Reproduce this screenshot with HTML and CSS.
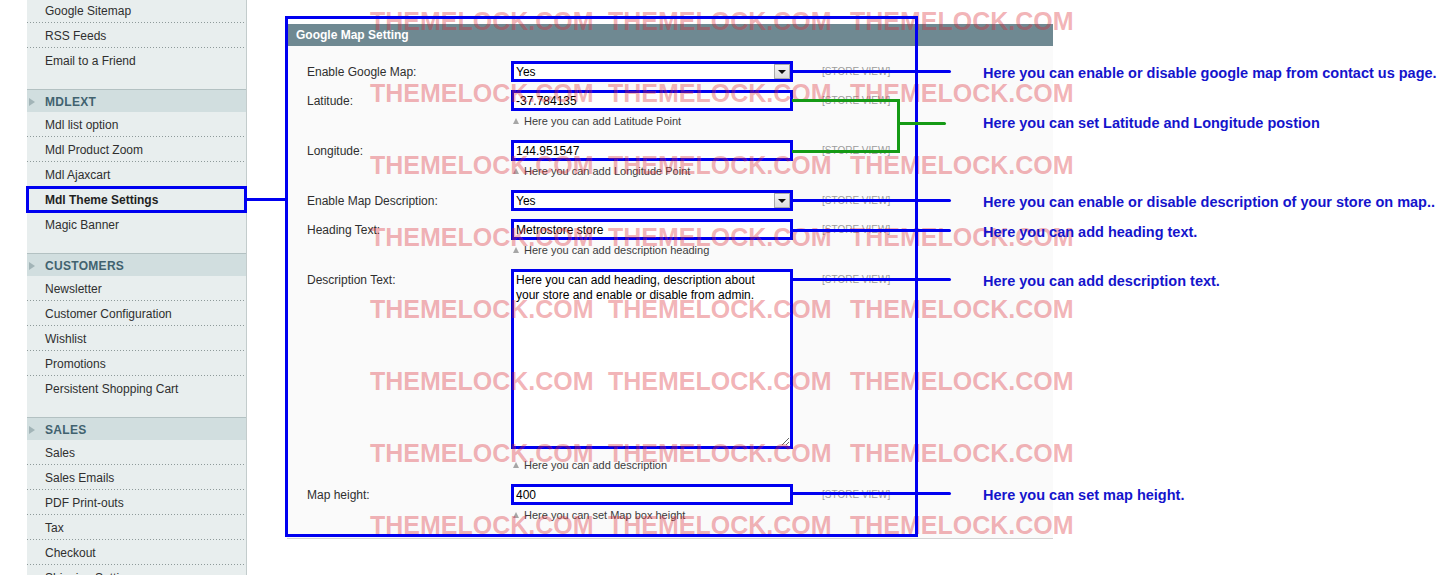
FILE: index.html
```html
<!DOCTYPE html>
<html lang="en">
<head>
<meta charset="utf-8">
<title>Google Map Setting</title>
<link rel="stylesheet" href="styles.css">
</head>
<body>
<div class="page">
  <div class="layout">
    <nav class="sidebar">
      <div class="section section-first">
        <ul class="items">
          <li>Google Sitemap</li>
          <li>RSS Feeds</li>
          <li>Email to a Friend</li>
        </ul>
      </div>
      <div class="section">
        <div class="section-head"><span class="arrow"></span>MDLEXT</div>
        <ul class="items">
          <li>Mdl list option</li>
          <li>Mdl Product Zoom</li>
          <li>Mdl Ajaxcart</li>
          <li class="active">Mdl Theme Settings</li>
          <li>Magic Banner</li>
        </ul>
      </div>
      <div class="section">
        <div class="section-head"><span class="arrow"></span>CUSTOMERS</div>
        <ul class="items">
          <li>Newsletter</li>
          <li>Customer Configuration</li>
          <li>Wishlist</li>
          <li>Promotions</li>
          <li>Persistent Shopping Cart</li>
        </ul>
      </div>
      <div class="section">
        <div class="section-head"><span class="arrow"></span>SALES</div>
        <ul class="items">
          <li>Sales</li>
          <li>Sales Emails</li>
          <li>PDF Print-outs</li>
          <li>Tax</li>
          <li>Checkout</li>
          <li>Shipping Settings</li>
        </ul>
      </div>
    </nav>

    <main class="content">
      <section class="fieldset">
        <header class="fieldset-head">Google Map Setting</header>
        <div class="fieldset-body">
          <div class="row">
            <div class="label">Enable Google Map:</div>
            <div class="value">
              <div class="select"><span class="select-text">Yes</span><span class="select-btn"></span></div>
            </div>
            <div class="scope">[STORE VIEW]</div>
          </div>

          <div class="row row-hint">
            <div class="label">Latitude:</div>
            <div class="value">
              <input class="input" type="text" value="-37.784135">
              <div class="hint"><span class="hint-arrow"></span>Here you can add Latitude Point</div>
            </div>
            <div class="scope">[STORE VIEW]</div>
          </div>

          <div class="row row-hint">
            <div class="label">Longitude:</div>
            <div class="value">
              <input class="input" type="text" value="144.951547">
              <div class="hint"><span class="hint-arrow"></span>Here you can add Longitude Point</div>
            </div>
            <div class="scope">[STORE VIEW]</div>
          </div>

          <div class="row">
            <div class="label">Enable Map Description:</div>
            <div class="value">
              <div class="select"><span class="select-text">Yes</span><span class="select-btn"></span></div>
            </div>
            <div class="scope">[STORE VIEW]</div>
          </div>

          <div class="row row-hint">
            <div class="label">Heading Text:</div>
            <div class="value">
              <input class="input" type="text" value="Metrostore store">
              <div class="hint"><span class="hint-arrow"></span>Here you can add description heading</div>
            </div>
            <div class="scope">[STORE VIEW]</div>
          </div>

          <div class="row row-hint">
            <div class="label">Description Text:</div>
            <div class="value">
              <textarea class="textarea">Here you can add heading, description about
your store and enable or disable from admin.</textarea>
              <div class="hint hint-after-area"><span class="hint-arrow"></span>Here you can add description</div>
            </div>
            <div class="scope">[STORE VIEW]</div>
          </div>

          <div class="row row-hint row-last">
            <div class="label">Map height:</div>
            <div class="value">
              <input class="input" type="text" value="400">
              <div class="hint"><span class="hint-arrow"></span>Here you can set Map box height</div>
            </div>
            <div class="scope">[STORE VIEW]</div>
          </div>
        </div>
      </section>
    </main>
  </div>

  <div class="watermark" aria-hidden="true">
    <span>THEMELOCK.COM</span><span>THEMELOCK.COM</span><span>THEMELOCK.COM</span>
    <span>THEMELOCK.COM</span><span>THEMELOCK.COM</span><span>THEMELOCK.COM</span>
    <span>THEMELOCK.COM</span><span>THEMELOCK.COM</span><span>THEMELOCK.COM</span>
    <span>THEMELOCK.COM</span><span>THEMELOCK.COM</span><span>THEMELOCK.COM</span>
    <span>THEMELOCK.COM</span><span>THEMELOCK.COM</span><span>THEMELOCK.COM</span>
    <span>THEMELOCK.COM</span><span>THEMELOCK.COM</span><span>THEMELOCK.COM</span>
    <span>THEMELOCK.COM</span><span>THEMELOCK.COM</span><span>THEMELOCK.COM</span>
    <span>THEMELOCK.COM</span><span>THEMELOCK.COM</span><span>THEMELOCK.COM</span>
  </div>

  <div class="marks">
    <div class="box box-side"></div>
    <div class="bar bar-side"></div>
    <div class="box box-panel"></div>

    <div class="ln ln-1"></div>
    <div class="ln ln-4"></div>
    <div class="ln ln-5"></div>
    <div class="ln ln-6"></div>
    <div class="ln ln-7"></div>

    <div class="gr gr-top"></div>
    <div class="gr gr-bottom"></div>
    <div class="gr gr-vert"></div>
    <div class="gr gr-out"></div>

    <p class="note note-1">Here you can enable or disable google map from contact us page.</p>
    <p class="note note-2">Here you can set Latitude and Longitude postion</p>
    <p class="note note-4">Here you can enable or disable description of your store on map..</p>
    <p class="note note-5">Here you can add heading text.</p>
    <p class="note note-6">Here you can add description text.</p>
    <p class="note note-7">Here you can set map height.</p>
  </div>
</div>
</body>
</html>
```

FILE: styles.css
```css
* { box-sizing: border-box; }

html, body {
  margin: 0;
  padding: 0;
  background: #ffffff;
}

body {
  font-family: "Liberation Sans", Arial, sans-serif;
  font-size: 12px;
  color: #2f2f2f;
}

.page {
  position: relative;
  width: 1439px;
  height: 575px;
  overflow: hidden;
}

.layout {
  display: flex;
  align-items: stretch;
  min-height: 575px;
}

/* ---------- sidebar ---------- */
.sidebar {
  margin-left: 27px;
  width: 220px;
  flex: 0 0 220px;
  background: #e8eeee;
  border-right: 1px solid #c3cccc;
}

.section { padding-bottom: 16px; }
.section-first { margin-top: -2px; }

.section-head {
  display: flex;
  align-items: center;
  height: 23px;
  padding-top: 1px;
  border-top: 1px solid #b3c1c2;
  background: #d1dedf;
  padding-left: 2px;
  font-weight: bold;
  font-size: 12px;
  letter-spacing: 0.3px;
  color: #41626f;
}

.arrow {
  width: 0;
  height: 0;
  border-left: 6px solid #a2b4b7;
  border-top: 4px solid transparent;
  border-bottom: 4px solid transparent;
  margin-right: 10px;
}

.items {
  list-style: none;
  margin: 0;
  padding: 0;
}

.items li {
  position: relative;
  height: 25px;
  padding-top: 1px;
  line-height: 24px;
  padding-left: 18px;
  color: #2f2f2f;
  white-space: nowrap;
  background-image: linear-gradient(to right, #8e9a9a 1px, transparent 1px);
  background-size: 3px 1px;
  background-repeat: repeat-x;
  background-position: 0 24px;
}

.items li:last-child { background-image: none; }

.items li.active {
  font-weight: bold;
  color: #1f1f1f;
}

/* ---------- content ---------- */
.content {
  padding-left: 40px;
  padding-top: 24px;
}

.fieldset { width: 766px; }

.fieldset-head {
  height: 22px;
  line-height: 22px;
  background: #6f8992;
  color: #ffffff;
  font-weight: bold;
  font-size: 12px;
  padding-left: 9px;
}

.fieldset-body {
  background: #fafafa;
  border-bottom: 1px solid #d3d3d3;
  padding: 15px 0 16px 0;
}

.row {
  display: grid;
  grid-template-columns: 224px 282px auto;
  align-items: start;
  margin-bottom: 8px;
}

.row-hint { margin-bottom: 12px; }
.row-last { margin-bottom: 0; }

.label {
  padding-left: 20px;
  padding-top: 1px;
  line-height: 20px;
  color: #2f2f2f;
  font-size: 12px;
}

.scope {
  margin-left: 29px;
  line-height: 21px;
  font-size: 10px;
  color: #9c9c9c;
  white-space: nowrap;
}

.select {
  display: flex;
  height: 21px;
  border: 3px solid #0000f0;
  background: #ffffff;
}

.select-text {
  flex: 1;
  padding-left: 2px;
  line-height: 16px;
  color: #000000;
}

.select-btn {
  position: relative;
  width: 16px;
  height: 15px;
  border: 1px solid #a9a9a9;
  background: linear-gradient(#f4f4f4, #dcdcdc);
}

.select-btn::after {
  content: "";
  position: absolute;
  left: 3px;
  top: 5px;
  border-top: 4px solid #111111;
  border-left: 4px solid transparent;
  border-right: 4px solid transparent;
}

.input {
  display: block;
  -webkit-appearance: none;
  appearance: none;
  width: 282px;
  height: 21px;
  margin: 0;
  padding: 1px 2px 0 2px;
  border: 3px solid #0000f0;
  border-radius: 0;
  background: #ffffff;
  font-family: "Liberation Sans", Arial, sans-serif;
  font-size: 12px;
  line-height: 14px;
  color: #000000;
  outline: none;
}

.textarea {
  display: block;
  width: 282px;
  height: 180px;
  margin: 0;
  padding: 1px 2px;
  border: 3px solid #0000f0;
  border-radius: 0;
  background: #ffffff;
  font-family: "Liberation Sans", Arial, sans-serif;
  font-size: 12px;
  line-height: 15px;
  color: #000000;
  overflow: hidden;
  outline: none;
}

.hint {
  display: flex;
  align-items: center;
  margin-top: 3px;
  height: 14px;
  line-height: 14px;
  font-size: 11px;
  color: #3c3c3c;
  white-space: nowrap;
}

.hint-after-area { margin-top: 9px; }

.hint-arrow {
  width: 0;
  height: 0;
  margin-left: 2px;
  margin-right: 5px;
  border-bottom: 6px solid #a6a6a6;
  border-left: 3.5px solid transparent;
  border-right: 3.5px solid transparent;
}

/* ---------- watermark overlay ---------- */
.watermark {
  position: absolute;
  left: 370px;
  top: 12px;
  display: grid;
  grid-template-columns: 238px 242px 224px;
  grid-auto-rows: 72px;
  pointer-events: none;
  z-index: 2;
}

.watermark span {
  font-family: "Liberation Sans", Arial, sans-serif;
  font-weight: bold;
  font-size: 25px;
  line-height: 18px;
  height: 18px;
  color: rgba(220, 40, 50, 0.36);
  white-space: nowrap;
}

/* ---------- annotation overlay ---------- */
.marks {
  position: absolute;
  left: 0;
  top: 0;
  width: 1439px;
  height: 575px;
  pointer-events: none;
  z-index: 3;
}

.box {
  position: absolute;
  border: 3px solid #0000f0;
}

.box-side { left: 26px; top: 186px; width: 221px; height: 27px; }
.box-panel { left: 285px; top: 16px; width: 633px; height: 521px; }

.bar {
  position: absolute;
  height: 3px;
  background: #0000f0;
}

.bar-side { left: 246px; top: 198px; width: 40px; }

.ln {
  position: absolute;
  left: 792px;
  width: 159px;
  height: 3px;
  background: #0000f0;
  border-radius: 0 2px 2px 0;
}

.ln-1 { top: 70px; }
.ln-4 { top: 199px; }
.ln-5 { top: 229px; }
.ln-6 { top: 278px; }
.ln-7 { top: 492px; }

.gr {
  position: absolute;
  background: #159a15;
}

.gr-top { left: 792px; top: 99px; width: 108px; height: 3px; }
.gr-bottom { left: 792px; top: 150px; width: 108px; height: 3px; }
.gr-vert { left: 897px; top: 99px; width: 3px; height: 54px; }
.gr-out { left: 897px; top: 122px; width: 49px; height: 3px; border-radius: 0 2px 2px 0; }

.note {
  position: absolute;
  left: 983px;
  margin: 0;
  font-family: "Liberation Sans", Arial, sans-serif;
  font-weight: bold;
  font-size: 14.5px;
  line-height: 17px;
  color: #1414cc;
  white-space: nowrap;
}

.note-1 { top: 65px; }
.note-2 { top: 115px; }
.note-4 { top: 194px; }
.note-5 { top: 224px; }
.note-6 { top: 273px; }
.note-7 { top: 487px; }
```
